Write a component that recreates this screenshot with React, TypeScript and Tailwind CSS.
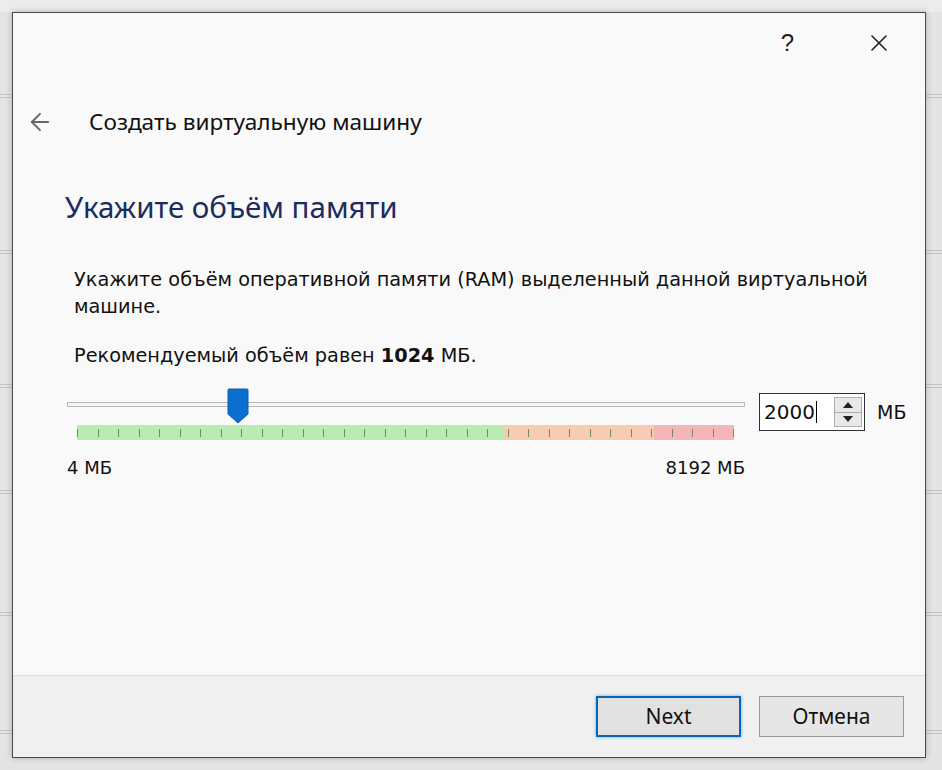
import { ArrowLeft, X } from 'lucide-react';

const ticks = Array.from({ length: 33 }, (_, i) => i);

function MemorySlider() {
  return (
    <div className="relative w-[680px] h-[48px]">
      {/* groove */}
      <div className="absolute left-0 top-[10px] w-[678px] h-[5px] border border-[#b9b9b9] bg-[#f4f4f4]" />
      {/* colour scale */}
      <div className="absolute left-[10px] top-[33px] flex h-[15px] w-[657px]">
        <div className="w-[427px] bg-[#b9ecb0]" />
        <div className="w-[150px] bg-[#f6cdb4]" />
        <div className="w-[80px] bg-[#f4b6b8]" />
      </div>
      <div className="absolute left-[10px] top-[37px] h-[8px] w-[657px]">
        {ticks.map((t) => (
          <div
            key={t}
            className="absolute top-0 h-[8px] w-px bg-[#6f8a6a]"
            style={{ left: `${(t * 656) / 32}px` }}
          />
        ))}
      </div>
      {/* thumb */}
      <svg className="absolute left-[160px] top-[-4px]" width="22" height="36" viewBox="0 0 22 36">
        <path d="M1 2 Q1 1 2 1 H20 Q21 1 21 2 V26 L11 35 L1 26 Z" fill="#0a6fd0" stroke="#0a5cb0" strokeWidth="1" />
      </svg>
    </div>
  );
}

export default function App() {
  return (
    <div className="relative w-[942px] h-[770px] overflow-hidden bg-[#e4e4e4] pt-[12px] pl-[12px]" style={{ fontFamily: '"Noto Sans", sans-serif' }}>
      {/* window behind */}
      <div className="absolute left-0 top-0 h-[12px] w-[942px] bg-[#ececec]" />
      {[94, 250, 384, 490, 612, 730].map((y) => (
        <div key={y} className="absolute left-0 w-[942px] h-[4px] border-y border-[#c4c4c4]" style={{ top: `${y}px` }} />
      ))}

      <div className="relative flex h-[746px] w-[914px] flex-col border border-[#4a4a4a] bg-[#f9f9f9] shadow-[0_0_6px_rgba(0,0,0,0.25)]">
        {/* title bar */}
        <div className="flex h-[60px] items-center justify-end pr-[32px] pt-[0px]">
          <span className="mr-[71px] text-[24px] text-[#222]" style={{ fontFamily: '"Liberation Sans", sans-serif' }}>?</span>
          <X size={28} strokeWidth={1.4} className="text-[#222]" />
        </div>

        {/* wizard header */}
        <div className="mt-[32px] flex items-center">
          <ArrowLeft size={28} strokeWidth={1.6} className="ml-[13px] text-[#666]" />
          <span className="ml-[35px] text-[22.6px] text-[#111]">Создать виртуальную машину</span>
        </div>

        <div className="ml-[52px] mt-[46px] text-[29.5px] text-[#1c2c5e]">Укажите объём памяти</div>

        <div className="ml-[61px] mt-[37px] w-[840px] text-[19.3px] leading-[27px] text-[#111]" style={{ fontFamily: '"DejaVu Sans", sans-serif' }}>
          <p className="w-[800px]">Укажите объём оперативной памяти (RAM) выделенный данной виртуальной машине.</p>
          <p className="mt-[22px]">
            Рекомендуемый объём равен <b>1024</b> МБ.
          </p>
        </div>

        <div className="ml-[54px] mt-[23px] flex items-start">
          <div className="flex flex-col">
            <MemorySlider />
            <div className="mt-[14px] flex w-[678px] justify-between text-[18px] text-[#111]" style={{ fontFamily: '"DejaVu Sans", sans-serif' }}>
              <span>4 МБ</span>
              <span>8192 МБ</span>
            </div>
          </div>
          <div className="ml-[12px] mt-[1px] flex items-center">
            <div className="flex h-[38px] w-[106px] items-center justify-between border border-[#333] bg-white pl-[4px] pr-[2px]">
              <span className="text-[20px] text-[#111]" style={{ fontFamily: '"DejaVu Sans", sans-serif' }}>
                2000<span className="ml-px inline-block h-[22px] w-px translate-y-[4px] bg-black" />
              </span>
              <div className="flex h-[30px] w-[28px] flex-col border border-[#adadad] bg-[#e9e9e9]">
                <div className="flex flex-1 items-center justify-center border-b border-[#adadad]">
                  <svg width="10" height="6" viewBox="0 0 10 6"><path d="M0 6 L5 0 L10 6 Z" fill="#222" /></svg>
                </div>
                <div className="flex flex-1 items-center justify-center">
                  <svg width="10" height="6" viewBox="0 0 10 6"><path d="M0 0 L5 6 L10 0 Z" fill="#222" /></svg>
                </div>
              </div>
            </div>
            <span className="ml-[12px] text-[19px] text-[#111]" style={{ fontFamily: '"DejaVu Sans", sans-serif' }}>МБ</span>
          </div>
        </div>

        <div className="flex-1" />

        {/* footer */}
        <div className="flex h-[82px] items-center justify-end gap-[18px] border-t border-[#dcdcdc] bg-[#f0f0f0] pr-[21px]">
          <button className="h-[41px] w-[145px] border-2 border-[#0a63b5] bg-[#e1e1e1] text-[21px] text-[#111] shadow-[0_0_3px_rgba(0,120,215,0.6)]">Next</button>
          <button className="h-[41px] w-[145px] border border-[#9a9a9a] bg-[#e6e6e6] text-[21px] text-[#111]">Отмена</button>
        </div>
      </div>
    </div>
  );
}
